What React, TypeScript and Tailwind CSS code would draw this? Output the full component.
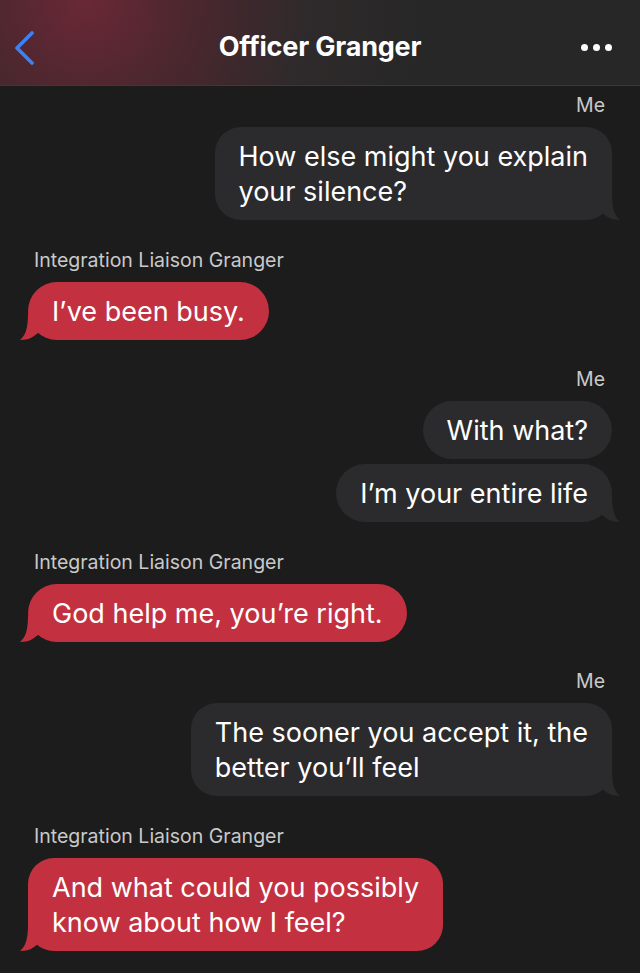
import React from 'react';

type Group = { from: 'me' | 'them'; msgs: string[] };

const groups: Group[] = [
  { from: 'me', msgs: ['How else might you explain\nyour silence?'] },
  { from: 'them', msgs: ['I’ve been busy.'] },
  { from: 'me', msgs: ['With what?', 'I’m your entire life'] },
  { from: 'them', msgs: ['God help me, you’re right.'] },
  { from: 'me', msgs: ['The sooner you accept it, the\nbetter you’ll feel'] },
  { from: 'them', msgs: ['And what could you possibly\nknow about how I feel?'] },
];

const Tail = ({ side, color }: { side: 'left' | 'right'; color: string }) => (
  <svg
    width="24"
    height="28"
    viewBox="0 0 24 28"
    className={
      side === 'left'
        ? 'absolute bottom-0 left-[-8px]'
        : 'absolute bottom-0 right-[-8px] -scale-x-100'
    }
  >
    <path d="M8 2 C8 17 5 24 0 28 C5 28 10 27 14 24 L18 21 L24 10 L24 2 Z" fill={color} />
  </svg>
);

const Bubble = ({ text, side, tail }: { text: string; side: 'left' | 'right'; tail: boolean }) => {
  const color = side === 'left' ? '#c33141' : '#2b2b2d';
  const lines = text.split('\n');
  return (
    <div
      className={`relative px-[24px] pt-[12px] pb-[11px] text-[27px] leading-[35px] text-white ${
        lines.length > 1 ? 'rounded-[26px]' : 'rounded-[29px]'
      } ${side === 'left' ? 'self-start bg-[#c33141]' : 'self-end bg-[#2b2b2d]'}`}
    >
      {tail && <Tail side={side} color={color} />}
      <span className="relative">
        {lines.map((l, i) => (
          <span key={i} className="block whitespace-nowrap">
            {l}
          </span>
        ))}
      </span>
    </div>
  );
};

export default function App() {
  return (
    <div
      className="min-h-[973px] w-[640px] overflow-hidden bg-[#1c1c1c] text-white"
      style={{ fontFamily: 'Inter, "Noto Sans", sans-serif' }}
    >
      {/* header */}
      <div className="relative flex h-[86px] items-center justify-center border-b border-[#3a3a3a] bg-[radial-gradient(circle_at_85px_0px,#6a2836_0%,#4a272e_110px,#2f2a2b_220px,#272727_340px)] pt-[10px]">
        <svg width="24" height="34" viewBox="0 0 24 34" className="absolute left-[13px] top-[31px]">
          <polyline
            points="19,2 4,17 19,32"
            fill="none"
            stroke="#3b82f6"
            strokeWidth="3.6"
            strokeLinecap="round"
            strokeLinejoin="round"
          />
        </svg>
        <h1 className="text-[27px] font-bold tracking-[-0.2px]">Officer Granger</h1>
        <div className="absolute right-[28px] top-[44px] flex gap-[5px]">
          <span className="h-[7px] w-[7px] rounded-full bg-white" />
          <span className="h-[7px] w-[7px] rounded-full bg-white" />
          <span className="h-[7px] w-[7px] rounded-full bg-white" />
        </div>
      </div>

      {/* messages */}
      <div className="flex flex-col px-7 pt-[8px]">
        {groups.map((g, gi) => (
          <div key={gi} className={`flex flex-col gap-[5px] ${gi === 0 ? '' : 'mt-[28.6px]'}`}>
            <div
              className={`mb-[6px] text-[19.5px] leading-[22px] text-[#c9c9c9] ${
                g.from === 'me' ? 'self-end pr-[7px]' : 'self-start pl-[6px]'
              }`}
            >
              {g.from === 'me' ? 'Me' : 'Integration Liaison Granger'}
            </div>
            {g.msgs.map((m, mi) => (
              <Bubble
                key={mi}
                text={m}
                side={g.from === 'me' ? 'right' : 'left'}
                tail={mi === g.msgs.length - 1}
              />
            ))}
          </div>
        ))}
      </div>
    </div>
  );
}
